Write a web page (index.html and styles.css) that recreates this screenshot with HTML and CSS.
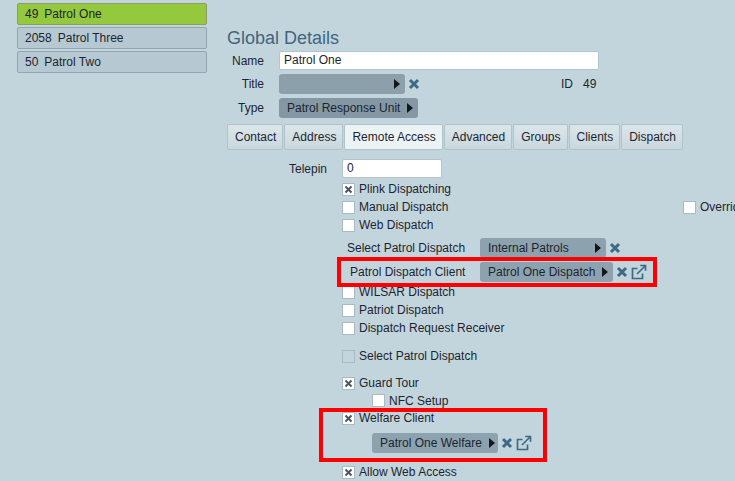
FILE: index.html
```html
<!DOCTYPE html>
<html lang="en">
<head>
<meta charset="utf-8">
<title>Patrol Details</title>
<link rel="stylesheet" href="styles.css">
</head>
<body>
<svg class="defs" width="0" height="0" aria-hidden="true">
  <symbol id="x" viewBox="0 0 12 12"><path d="M2 2 10 10M10 2 2 10" fill="none" stroke="currentColor" stroke-width="3"/></symbol>
  <symbol id="ext" viewBox="0 0 16 16"><path d="M11.5 9.5V14.5H1.5V4.5H6.5M6 10 14 2M9.2 1.5H14.5V6.8" fill="none" stroke="currentColor" stroke-width="1.7"/></symbol>
  <symbol id="check" viewBox="0 0 9 9"><path d="M1.5 1.5 7.5 7.5M7.5 1.5 1.5 7.5" fill="none" stroke="currentColor" stroke-width="2"/></symbol>
</svg>
<div class="page">
  <nav class="list">
    <a class="item active"><span>49</span><span>Patrol One</span></a>
    <a class="item"><span>2058</span><span>Patrol Three</span></a>
    <a class="item"><span>50</span><span>Patrol Two</span></a>
  </nav>
  <main class="main">
    <h2 class="heading">Global Details</h2>
    <div class="row name-row"><label class="label">Name</label><div class="input wide">Patrol One</div></div>
    <div class="row title-row">
      <label class="label">Title</label>
      <div class="pill title-pill"><span></span><i class="arrow"></i></div>
      <svg class="ico-x"><use href="#x"/></svg>
      <span class="id-label">ID</span><span class="id-value">49</span>
    </div>
    <div class="row type-row">
      <label class="label">Type</label>
      <div class="pill dark"><span>Patrol Response Unit</span><i class="arrow"></i></div>
    </div>
    <div class="tabs">
      <a class="tab">Contact</a><a class="tab">Address</a><a class="tab on">Remote Access</a><a class="tab">Advanced</a><a class="tab">Groups</a><a class="tab">Clients</a><a class="tab">Dispatch</a>
    </div>
    <div class="panel">
      <div class="telepin"><label class="tel-label">Telepin</label><div class="input tel">0</div></div>
      <div class="check c1"><span class="box"><svg><use href="#check"/></svg></span>Plink Dispatching</div>
      <div class="check override-row"><span class="box"></span>Manual Dispatch<span class="override"><span class="box"></span>Override</span></div>
      <div class="check"><span class="box"></span>Web Dispatch</div>
      <div class="select r1"><span class="sel-label">Select Patrol Dispatch</span><div class="pill w126"><span>Internal Patrols</span><i class="arrow"></i></div><svg class="ico-x"><use href="#x"/></svg></div>
      <div class="select r2"><span class="sel-label ind">Patrol Dispatch Client</span><div class="pill w133"><span>Patrol One Dispatch</span><i class="arrow"></i></div><svg class="ico-x"><use href="#x"/></svg><svg class="ico-ext"><use href="#ext"/></svg></div>
      <div class="check wilsar"><span class="box"></span>WILSAR Dispatch</div>
      <div class="check"><span class="box"></span>Patriot Dispatch</div>
      <div class="check"><span class="box"></span>Dispatch Request Receiver</div>
      <div class="check disabled"><span class="box"></span>Select Patrol Dispatch</div>
      <div class="check guard"><span class="box"><svg><use href="#check"/></svg></span>Guard Tour</div>
      <div class="check sub"><span class="box"></span>NFC Setup</div>
      <div class="check"><span class="box"><svg><use href="#check"/></svg></span>Welfare Client</div>
      <div class="select welfare"><div class="pill w126"><span>Patrol One Welfare</span><i class="arrow"></i></div><svg class="ico-x"><use href="#x"/></svg><svg class="ico-ext"><use href="#ext"/></svg></div>
      <div class="check allow"><span class="box"><svg><use href="#check"/></svg></span>Allow Web Access</div>
    </div>
  </main>
  <div class="mark m1"></div>
  <div class="mark m2"></div>
</div>
</body>
</html>
```
FILE: styles.css
```css
* { box-sizing: border-box; }
html, body { margin: 0; height: 100%; overflow: hidden; }
body { background: #c3d5dc; font: 12px/14px "Liberation Sans", Arial, sans-serif; color: #1d2430; }
.defs { position: absolute; }
.page { position: relative; width: 735px; height: 481px; overflow: hidden; display: flex; align-items: flex-start; padding: 3px 0 0 17px; gap: 20px; }
.list { width: 190px; flex: none; display: flex; flex-direction: column; gap: 2px; }
.item { height: 22px; display: flex; align-items: center; gap: 6px; padding-left: 7px; border: 1px solid #93a5ae; border-radius: 2px; background: #b6c8d2; }
.item.active { background: #94c83d; border-color: #8aa05a; }
.main { width: 490px; flex: none; padding-top: 26px; }
.heading { margin: 0; height: 20px; font-size: 18px; line-height: 18px; font-weight: 400; color: #3f6580; }
.row { display: flex; align-items: center; }
.label { width: 37px; margin-right: 15px; text-align: right; flex: none; }
.name-row { margin-top: 2px; height: 19px; }
.input { background: #fff; border: 1px solid #b4c4cc; border-radius: 2px; height: 19px; line-height: 17px; padding-left: 4px; color: #1d2430; }
.wide { width: 320px; }
.title-row { margin-top: 4px; height: 20px; }
.type-row { margin-top: 4px; height: 20px; }
.pill { height: 20px; display: flex; align-items: center; justify-content: space-between; padding: 0 5px 0 8px; border-radius: 3px; background: #8ca2ae; flex: none; white-space: nowrap; }
.pill.dark { background: #8398a4; }
.title-pill { width: 126px; background: #8ca0ac; }
.w126 { width: 126px; }
.w133 { width: 133px; }
.arrow { width: 0; height: 0; border-left: 6px solid #12171d; border-top: 5px solid transparent; border-bottom: 5px solid transparent; margin-left: 7px; }
.ico-x { width: 12px; height: 12px; margin-left: 3px; color: #3f6a85; flex: none; }
.ico-ext { width: 16px; height: 16px; margin-left: 3px; color: #3f6a85; flex: none; }
.id-label { margin-left: 141px; }
.id-value { margin-left: 10px; }
.tabs { display: flex; margin-top: 6px; gap: 1px; }
.tab { height: 26px; line-height: 24px; padding: 0 6px 0 7px; border: 1px solid #b0c2ca; border-radius: 2px; background: linear-gradient(#dbe6ea, #c9d8de); }
.tab.on { background: #ecf3f5; }
.panel { padding-left: 115px; }
.telepin { display: flex; align-items: center; margin-top: 9px; margin-left: -53px; height: 19px; }
.tel-label { width: 53px; }
.tel { width: 100px; }
.check { height: 18px; display: flex; align-items: center; gap: 4px; position: relative; }
.c1 { margin-top: 2px; }
.box { width: 13px; height: 13px; background: #fff; border: 1px solid #a9bac3; display: flex; align-items: center; justify-content: center; flex: none; color: #4a5660; }
.box svg { width: 9px; height: 9px; }
.override { display: flex; align-items: center; gap: 4px; position: absolute; left: 341px; top: 2px; white-space: nowrap; }
.select { display: flex; align-items: center; }
.r1 { margin-top: 3px; height: 21px; }
.r2 { margin-top: 4px; height: 20px; }
.sel-label { width: 138px; padding-left: 5px; flex: none; }
.sel-label.ind { padding-left: 8px; }
.wilsar { margin-top: 1px; }
.disabled { margin-top: 10px; }
.disabled .box { background: #c3d5dc; }
.guard { margin-top: 9px; }
.sub { margin-left: 30px; height: 17px; }
.welfare { margin-left: 30px; margin-top: 6px; height: 20px; }
.allow { margin-top: 10px; }
.mark { position: absolute; border: 4px solid #f00; }
.m1 { left: 337px; top: 257px; width: 320px; height: 30px; }
.m2 { left: 319px; top: 408px; width: 228px; height: 54px; }
```
